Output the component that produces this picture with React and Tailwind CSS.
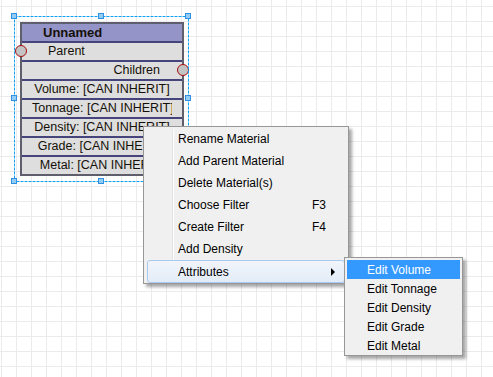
import React from 'react';

const ATTRS = ['Volume', 'Tonnage', 'Density', 'Grade', 'Metal'];

const MENU = [
  { label: 'Rename Material' },
  { label: 'Add Parent Material' },
  { label: 'Delete Material(s)' },
  { label: 'Choose Filter', key: 'F3' },
  { label: 'Create Filter', key: 'F4' },
  { label: 'Add Density' },
  { label: 'Attributes', sub: true, active: true },
];

function Handle({ x, y }) {
  return (
    <div
      className="absolute w-[6px] h-[6px] bg-[#93cdf6] border border-[#2f8fe0]"
      style={{ left: x - 3, top: y - 3 }}
    />
  );
}

function Port({ x, y }) {
  return (
    <div
      className="absolute w-[12px] h-[12px] rounded-full bg-[#c4c4c4] border-[1.5px] border-[#a80c0c]"
      style={{ left: x - 6, top: y - 6 }}
    />
  );
}

function MaterialNode() {
  return (
    <div className="absolute left-[20px] top-[22px] w-[164px] border-2 border-[#5e5e6c] bg-[#dedede] text-[#141008] font-['Liberation_Sans',Arial,sans-serif] text-[12.5px] leading-none">
      <div className="h-[17px] bg-[#9494c9] flex items-center pl-[21px] font-bold text-[13px]">Unnamed</div>
      <div className="h-[19px] border-t-2 border-[#45457c] flex items-center pl-[26px]">Parent</div>
      <div className="h-[19px] border-t-2 border-[#45457c] flex items-center justify-end pr-[22px]">Children</div>
      {ATTRS.map((a) => (
        <div key={a} className="h-[19px] border-t-2 border-[#45457c] flex items-center">
          <div className="mx-[10px] w-full overflow-hidden whitespace-nowrap text-center">
            {a}: [CAN INHERIT]
          </div>
        </div>
      ))}
    </div>
  );
}

function Selection() {
  const pts = [
    [14, 16], [101, 16], [188, 16],
    [14, 98], [188, 98],
    [14, 181], [101, 181], [188, 181],
  ];
  return (
    <>
      <svg className="absolute left-0 top-0" width="200" height="190">
        <rect x="14.5" y="16.5" width="174" height="165" fill="none" stroke="#12a0f4" strokeWidth="1" strokeDasharray="3 1" />
      </svg>
      {pts.map(([x, y]) => <Handle key={`${x}-${y}`} x={x} y={y} />)}
    </>
  );
}

function ContextMenu() {
  return (
    <div className="absolute left-[143px] top-[126px] w-[206px] h-[158px] bg-[#f0f0f0] border border-[#979797] shadow-[3px_3px_3px_rgba(0,0,0,0.35)] font-['Liberation_Sans',Arial,sans-serif] text-[12px] text-black">
      <div className="absolute left-[28px] top-[2px] bottom-[2px] w-[2px] border-l border-[#e2e3e3] border-r border-r-white" />
      <div className="relative flex flex-col pt-[1px] px-[3px]">
        {MENU.map((m) => (
          <div
            key={m.label}
            className={
              m.active
                ? 'h-[23px] flex items-center rounded-[3px] border border-[#a9c9ef] bg-[linear-gradient(#f1f5fb,#e3ecf8)] pl-[30px] pr-[8px]'
                : 'h-[22px] flex items-center border border-transparent pl-[30px] pr-[8px]'
            }
          >
            <span className="flex-1">{m.label}</span>
            {m.key && <span className="w-[24px]">{m.key}</span>}
            {m.sub && (
              <span className="w-0 h-0 border-y-[4px] border-y-transparent border-l-[4px] border-l-black mr-[1px]" />
            )}
          </div>
        ))}
      </div>
    </div>
  );
}

function SubMenu() {
  return (
    <div className="absolute left-[344px] top-[257px] w-[119px] h-[99px] bg-[#f0f0f0] border border-[#979797] shadow-[3px_3px_3px_rgba(0,0,0,0.35)] font-['Liberation_Sans',Arial,sans-serif] text-[12px] text-black">
      <div className="flex flex-col pt-[2px] px-[2px]">
        {ATTRS.map((a, i) => (
          <div
            key={a}
            className={
              i === 0
                ? 'h-[19px] flex items-center pl-[20px] bg-[#3399ff] text-white'
                : 'h-[19px] flex items-center pl-[20px]'
            }
          >
            Edit {a}
          </div>
        ))}
      </div>
    </div>
  );
}

export default function App() {
  return (
    <div className="relative w-[493px] h-[377px] overflow-hidden bg-white bg-[linear-gradient(to_right,#ebebeb_1px,transparent_1px),linear-gradient(to_bottom,#ebebeb_1px,transparent_1px)] bg-size-[15px_15px] bg-position-[1px_6px]">
      <MaterialNode />
      <Port x={21} y={51} />
      <Port x={183} y={70} />
      <Selection />
      <ContextMenu />
      <SubMenu />
    </div>
  );
}
